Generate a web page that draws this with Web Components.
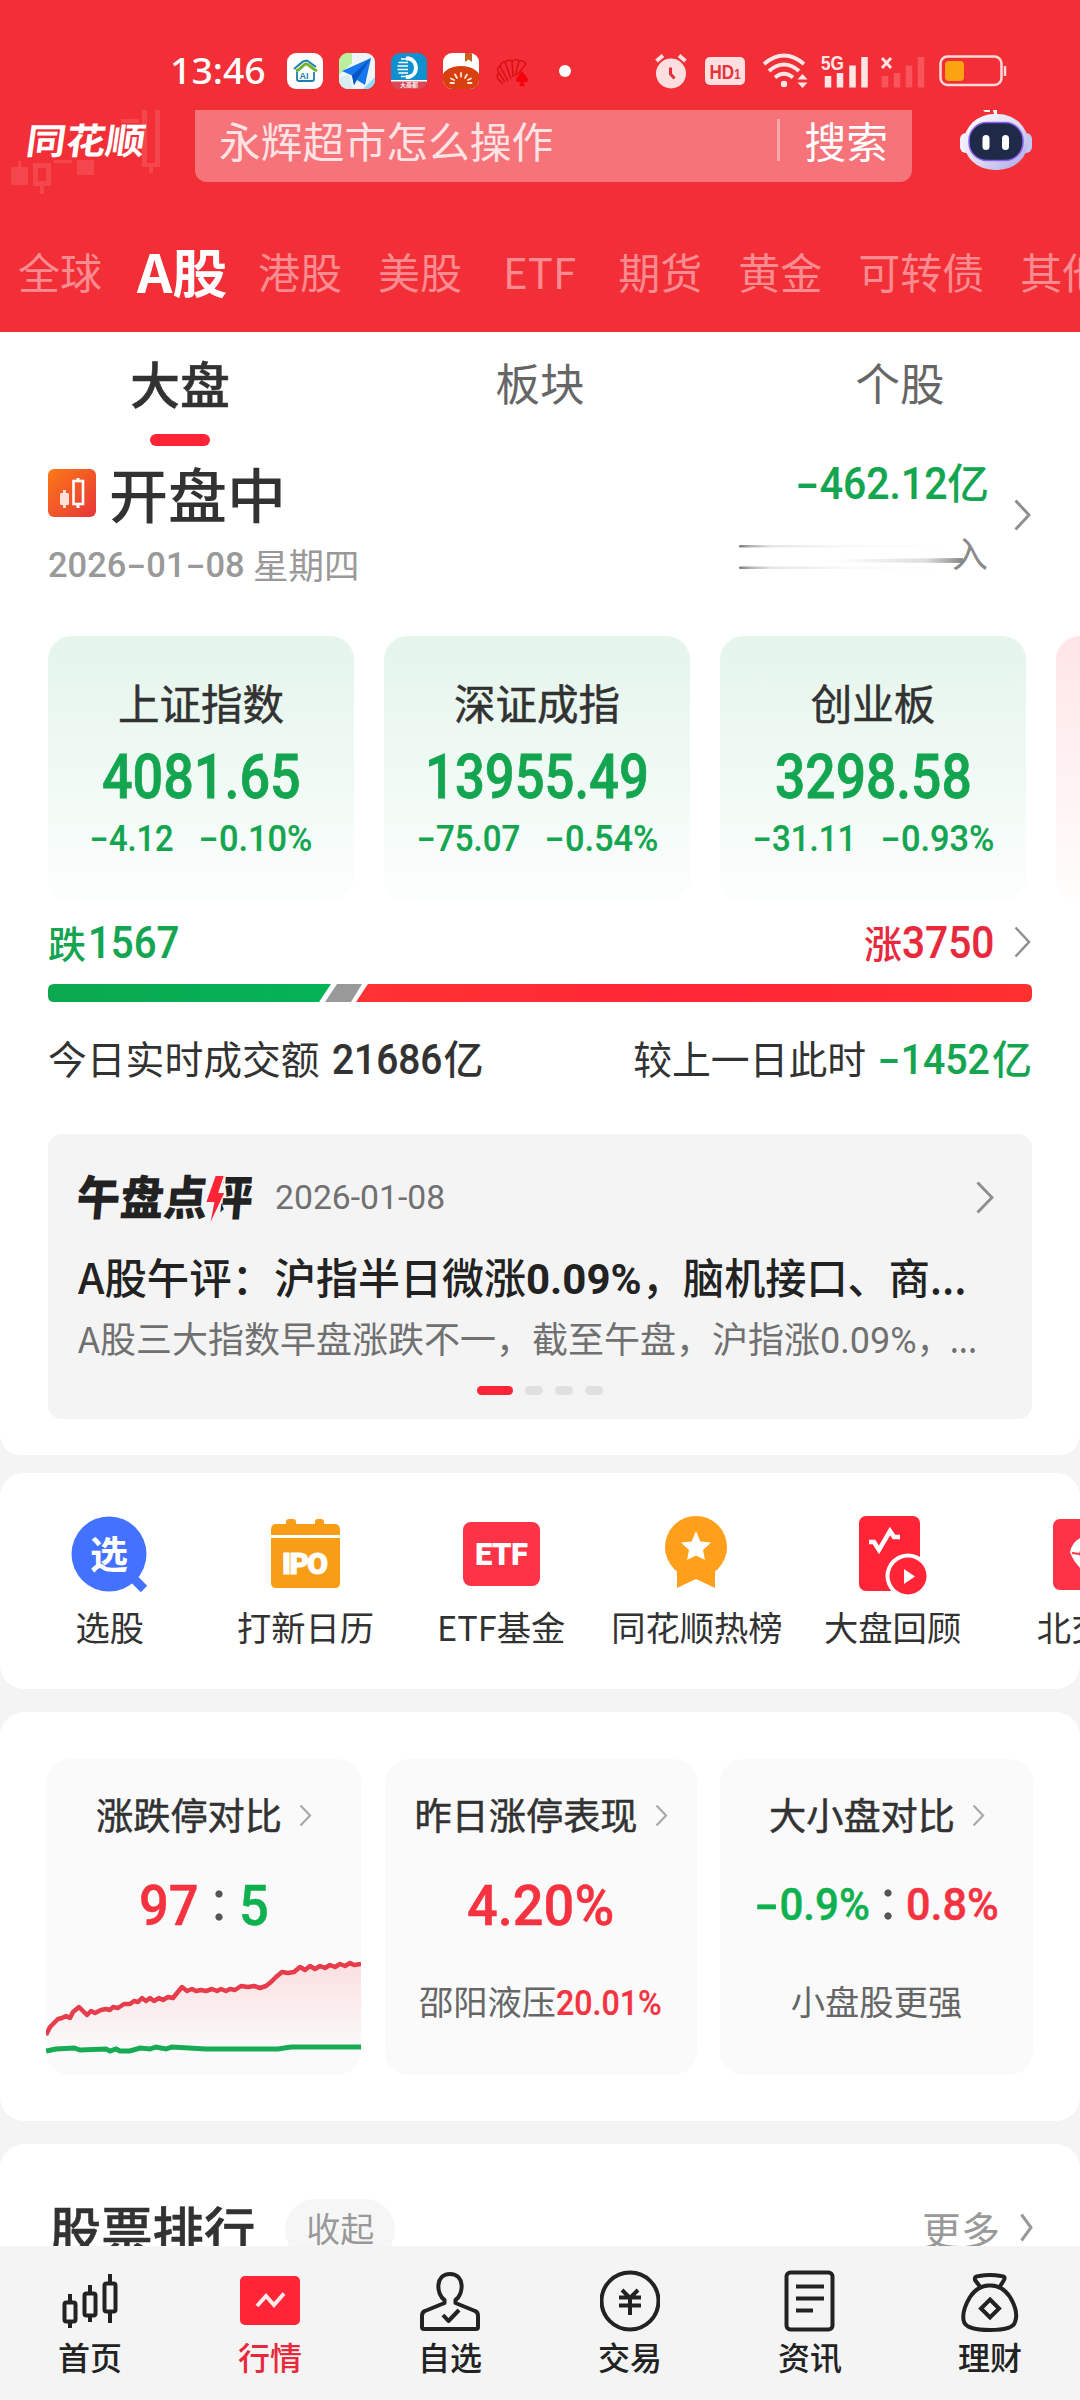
<!DOCTYPE html>
<html lang="zh-CN">
<head>
<meta charset="utf-8">
<title>同花顺</title>
<style>
html, body {
  margin: 0;
  padding: 0;
}
body {
  width: 1080px;
  height: 2400px;
  overflow: hidden;
  background: #f4f4f4;
  color: #323232;
  font-family: "Noto Sans CJK SC", "Noto Sans", sans-serif;
  font-size: 36px;
}
</style>
</head>
<body>
<market-app></market-app>
<script>
const DIN = `Roboto, "Noto Sans CJK SC", sans-serif`;

/* shared base: every element writes its html into an open shadow root */
class BaseElement extends HTMLElement {
  constructor() {
    super();
    this.attachShadow({ mode: "open" });
  }
  connectedCallback() {
    this.shadowRoot.innerHTML = this.html;
  }
  attr(name) {
    return this.getAttribute(name) || "";
  }
}

const chevron = (w, h, color = "#8f8f8f", sw = 3) =>
  `<svg width="${w}" height="${h}" viewBox="0 0 ${w} ${h}" fill="none" stroke="${color}" stroke-width="${sw}"><path d="M1.5 1.5L${w - 2} ${h / 2}L1.5 ${h - 1.5}"/></svg>`;

/**
 * `fit-text`
 * one line of text, squeezed or stretched to the width in `w`
 */
class FitText extends BaseElement {
  get html() {
    const text = this.attr("text");
    const inner = this.hasAttribute("din") ? text.replace(/-/g, "<i>-</i>") : text;
    return `
<style>
:host {
  display: inline-block;
  flex: none;
  width: ${this.attr("w")}px;
  white-space: nowrap;
}
:host([din]) {
  font-family: ${DIN};
  font-weight: 500;
  -webkit-text-stroke: .2px currentColor;
}
span {
  display: inline-block;
  transform-origin: 0 50%;
}
i {
  display: inline-block;
  font-style: normal;
  transform: scaleX(1.65);
  margin: 0 .12em;
}
</style><span>${inner}</span>`;
  }
  connectedCallback() {
    super.connectedCallback();
    const span = this.shadowRoot.querySelector("span");
    // offsetWidth ignores transforms, so a skewed parent does not disturb it
    const natural = span.offsetWidth;
    if (natural) {
      span.style.transform = `scaleX(${Number(this.attr("w")) / natural})`;
    }
  }
}

class StatusBar extends BaseElement {
  get html() {
    return `
<style>
:host {
  display: flex;
  align-items: center;
  height: 110px;
  box-sizing: border-box;
  padding: 32px 73px 0 170px;
  color: #fff;
  font: 500 37px "Noto Sans", sans-serif;
}
fit-text {
  margin-top: -3px;
}
.apps {
  display: flex;
  gap: 16px;
  margin-left: 21px;
}
.dot {
  width: 12px;
  height: 12px;
  border-radius: 50%;
  background: #fff;
  margin-left: 28px;
}
.sys {
  display: flex;
  align-items: center;
  margin-left: auto;
}
svg {
  display: block;
  overflow: visible;
}
</style>
<fit-text text="13:46" w="96"></fit-text>
<div class="apps">
  <svg width="36" height="36" viewBox="0 0 36 36"><rect width="36" height="36" rx="9" fill="#fff"/><path d="M7 16L16 8.500L20 7.500L29 14" fill="none" stroke="#1d7fb0" stroke-width="2"/><path d="M9 18C14 17 16 11 19 11S24 15 30 18" fill="none" stroke="#6fb52c" stroke-width="3"/><path d="M10 19V26Q10 28 12 28H25Q27 28 27 26V19" fill="none" stroke="#1d7fb0" stroke-width="1.800"/><text x="12.500" y="25.500" font-size="9" font-weight="700" fill="#1d7fb0" font-family="Liberation Sans">AI</text></svg>
  <svg width="36" height="36" viewBox="0 0 36 36"><defs><clipPath id="c"><rect width="36" height="36" rx="9"/></clipPath></defs><g clip-path="url(#c)"><rect width="36" height="36" fill="#eef6fb"/><path d="M0 0H13V10L0 22z" fill="#b9ef9c"/><path d="M36 24L24 36H36z" fill="#8adcf6"/><path d="M0 36V24L10 22L14 36z" fill="#d8edf2"/><path d="M32 5L3 18L13 22.500L15 32L18 27L26 32z" fill="#1677ee"/><path d="M32 5L13 22.500L15 32L18 26z" fill="#0a55c4"/></g></svg>
  <svg width="36" height="36" viewBox="0 0 36 36"><rect width="36" height="36" rx="9" fill="#1190cf"/><path d="M0 27H36Q36 36 27 36H9Q0 36 0 27z" fill="#d84a55"/><rect y="27" width="36" height="1.500" fill="#fff"/><path d="M15 5.500H18A9 9.500 0 0 1 18 24H15" fill="none" stroke="#fff" stroke-width="4"/><path d="M10 6H17M7.500 9.500H17M6.500 13H17M6.500 16.500H17M7.500 20H17M10 23.500H17" stroke="#fff" stroke-width="1.500"/><text x="9" y="34.200" font-size="6" fill="#fff" font-family="Noto Sans CJK SC">大高都</text></svg>
  <svg width="36" height="36" viewBox="0 0 36 36"><defs><clipPath id="t"><rect width="36" height="36" rx="9"/></clipPath></defs><g clip-path="url(#t)"><rect width="36" height="36" fill="#fff"/><ellipse cx="18" cy="27" rx="20" ry="14" fill="#d8400f"/><path d="M22 0H29V9L25.500 6.500L22 9z" fill="#c8601e"/><path d="M18 20V23.500M12 21.500L14 25M24 21.500L22 25M8 25.500L11 27M28 25.500L25 27M7.500 30H11M25 30H28.500" stroke="#ffe9d8" stroke-width="1.800" stroke-linecap="round"/></g></svg>
  <svg width="36" height="36" viewBox="0 0 36 36"><g fill="none" stroke="#dc0f18" stroke-width="1.600"><path d="M8 31L3 26Q1 22 4 20L10 29M4 20Q1 15 5 13L13 28M5 13Q6 9 10 9L16 26M10 9Q14 6 17 8L18 24M17 8Q22 5 24 8L20 23M24 8Q29 7 31 11L22 22"/></g><path d="M27 18L33 26Q33 30 28 29L30 33H24L26 29Q21 30 21 26z" fill="#f5000c"/></svg>
</div>
<div class="dot"></div>
<div class="sys">
  <svg width="32" height="36" viewBox="0 0 32 36" style="margin-right:18px"><circle cx="16" cy="20.500" r="15" fill="#ffdedf"/><path d="M1.500 8L8 2.500M30.500 8L24 2.500" stroke="#ffdedf" stroke-width="4"/><path d="M15.500 14.500V21L19.500 25.500" stroke="#e03038" stroke-width="3" fill="none"/></svg>
  <svg width="40" height="28" viewBox="0 0 40 28" style="margin-right:18px"><rect width="40" height="28" rx="5" fill="#ffdedf"/><text x="4.500" y="22" font-size="21" font-weight="700" textLength="31" lengthAdjust="spacingAndGlyphs" fill="#e5333b" font-family="Liberation Sans">HD<tspan font-size="14">1</tspan></text></svg>
  <svg width="46" height="36" viewBox="0 0 46 36" style="margin-right:12px"><g fill="none" stroke="#ffe6e6" stroke-width="3.800"><path d="M1 11Q21 -6 41 11"/><path d="M6 18Q21 5 36 18"/><path d="M12 24.500Q21 17 30 24.500"/></g><circle cx="21" cy="31" r="3.200" fill="#ffe6e6"/><path d="M34.500 26.500H44.500L39.500 21zM34.500 29.500H44.500L39.500 35z" fill="#ffe6e6"/></svg>
  <svg width="48" height="36" viewBox="0 0 48 36" style="margin-right:12px"><text x="0" y="16.500" font-size="21" font-weight="700" textLength="23" lengthAdjust="spacingAndGlyphs" fill="#ffe6e6" font-family="Liberation Sans">5G</text><path d="M7 23V34.500M19 20V34.500M31.500 12.500V34.500M43.500 4V34.500" stroke="#ffe6e6" stroke-width="6.500"/></svg>
  <svg width="44" height="36" viewBox="0 0 44 36" style="margin-right:14px"><path d="M1 5L10 15M10 5L1 15" stroke="#ffe6e6" stroke-width="2.800"/><path d="M4 23V34.500M16 20V34.500M28 12.500V34.500M40 4V34.500" stroke="#f9535b" stroke-width="6.500"/></svg>
  <svg width="68" height="32" viewBox="0 0 68 32"><rect x="1.500" y="1.500" width="61" height="28.500" rx="7" fill="none" stroke="#ffd9d9" stroke-width="2.500"/><rect x="6" y="6" width="19" height="20" rx="4" fill="#fca311"/><path d="M66 11V21" stroke="#ffd9d9" stroke-width="2.500"/></svg>
</div>`;
  }
}

class SearchHeader extends BaseElement {
  get html() {
    return `
<style>
:host {
  display: flex;
  height: 72px;
  position: relative;
  color: #fff;
}
.candles {
  position: absolute;
  left: 0;
  top: 0;
}
.logo {
  position: relative;
  width: 168px;
  padding-left: 27px;
  height: 56px;
  line-height: 56px;
  font-size: 36px;
  font-weight: 700;
}
.logo fit-text {
  transform: skewX(-8deg);
}
.box {
  display: flex;
  align-items: center;
  box-sizing: border-box;
  width: 717px;
  height: 72px;
  padding: 0 24px 12px 24px;
  border-radius: 0 0 12px 12px;
  background: #f67379;
  font-size: 41.800px;
  line-height: 60px;
}
.box span { margin-top: -1px; }
.hint { color: #ffe3e4; }
.rule {
  width: 3px;
  height: 42px;
  margin: 0 24px 0 auto;
  background: #fba8ab;
}
.robot { margin-left: 47px; }
svg { display: block; }
</style>
<svg class="candles" width="190" height="90" viewBox="0 0 190 90" fill="#f5464d"><rect x="11" y="57" width="17" height="18"/><rect x="18" y="51" width="3" height="7"/><path d="M33 53H51V76H44V84H40V76H33zM38 58V71H46V58z" fill-rule="evenodd"/><rect x="54" y="50" width="18" height="3"/><rect x="77" y="50" width="17" height="15"/><path d="M142 0H147V53H155V0H160V57H153V63H149V57H142z"/><rect x="121" y="9" width="18" height="4"/></svg>
<div class="logo"><fit-text text="同花顺" w="119"></fit-text></div>
<div class="box"><span class="hint">永辉超市怎么操作</span><div class="rule"></div><span>搜索</span></div>
<svg class="robot" width="74" height="62" viewBox="0 0 74 62">
  <defs><linearGradient id="h" x1="0" y1="0" x2="1" y2="1"><stop offset="0" stop-color="#fff"/><stop offset=".55" stop-color="#dcd8f4"/><stop offset="1" stop-color="#a8a4e8"/></linearGradient></defs>
  <path d="M24 0H31V2H26zM34 0H38V4H35z" fill="#fff"/>
  <rect x="1" y="23" width="14" height="20" rx="6" fill="#f1effb"/><rect x="59" y="23" width="14" height="20" rx="6" fill="#c3c6f4"/>
  <rect x="5" y="4" width="64" height="56" rx="30" fill="url(#h)"/>
  <rect x="10" y="12.500" width="54" height="38" rx="18" fill="#1e2a48" stroke="#8a5ff0" stroke-width="1.500"/>
  <rect x="23.500" y="25" width="7" height="15" rx="3.500" fill="#fff"/><rect x="43" y="25" width="7" height="15" rx="3.500" fill="#fff"/>
</svg>`;
  }
}

class MarketTabs extends BaseElement {
  get html() {
    return `
<style>
:host {
  display: flex;
  align-items: center;
  gap: 36px;
  height: 123px;
  margin-top: 27px;
  padding-left: 18px;
  white-space: nowrap;
  overflow: hidden;
  font-size: 42px;
  color: #fa8b90;
}
.on {
  font-size: 52px;
  font-weight: 700;
  color: #fff;
  margin: 0 -5px 0 -1px;
}
.etf { margin: 0 6px 0 5px; }
span { flex: none; }
</style>
<span>全球</span><fit-text class="on" text="A股" w="90"></fit-text><span>港股</span><span>美股</span><span class="etf">ETF</span><span>期货</span><span>黄金</span><span>可转债</span><span>其他</span>`;
  }
}

class SubTabs extends BaseElement {
  get html() {
    return `
<style>
:host {
  display: grid;
  grid-template-columns: repeat(3, 1fr);
  height: 114px;
  text-align: center;
  font-size: 44.500px;
  line-height: 100px;
  color: #666;
}
.on {
  font-size: 50px;
  font-weight: 500;
  -webkit-text-stroke: .5px currentColor;
  color: #323232;
}
.on::after {
  content: "";
  display: block;
  width: 60px;
  height: 12px;
  margin: 2px auto 0;
  border-radius: 6px;
  background: #ff2436;
}
</style>
<div class="on">大盘</div><div>板块</div><div>个股</div>`;
  }
}

class MarketState extends BaseElement {
  get html() {
    return `
<style>
:host {
  display: flex;
  height: 190px;
  box-sizing: border-box;
  padding: 0 48px;
}
.title {
  display: flex;
  align-items: center;
  gap: 13px;
  height: 80px;
  margin-top: 7px;
  font-size: 59px;
  line-height: 80px;
  font-weight: 500;
}
.title svg { display: block; }
.date {
  display: flex;
  gap: 8px;
  margin-top: 12px;
  font-size: 35.500px;
  line-height: 40px;
  color: #999;
}
.date fit-text { -webkit-text-stroke: 0; }
.date span { margin-top: -1px; }
.flow {
  margin-left: auto;
  width: 250px;
  text-align: right;
}
.amount {
  display: flex;
  justify-content: flex-end;
  align-items: baseline;
  height: 50px;
  margin: 10px -2px 0 0;
  font-size: 42px;
  line-height: 50px;
  font-weight: 500;
  color: #13a54f;
}
.amount fit-text { font-size: 45px; }
.smear {
  display: flex;
  justify-content: flex-end;
  align-items: flex-start;
  margin: 26px -2px 0 0;
  font-size: 36px;
  line-height: 40px;
  color: #8a8a8a;
}
.smear span {
  width: 25px;
  direction: rtl;
  margin-right: 1px;
}
.more {
  margin: 53px 1px 0 27px;
}
.more svg { display: block; }
</style>
<div>
  <div class="title">
    <svg width="48" height="48" viewBox="0 0 48 48"><defs><linearGradient id="g" x1="0" y1="0" x2="1" y2="1"><stop offset="0" stop-color="#fb7a16"/><stop offset="1" stop-color="#e8343a"/></linearGradient></defs><rect width="48" height="48" rx="6" fill="url(#g)"/><rect x="12" y="24" width="9" height="12" rx="1" fill="#ffe0d6"/><path d="M16.500 21V39" stroke="#ffe0d6" stroke-width="3"/><rect x="25.500" y="12" width="9.500" height="23" fill="none" stroke="#fff" stroke-width="2.600"/><path d="M30 9V12M30 35V39" stroke="#fff" stroke-width="3"/></svg>
    <fit-text text="开盘中" w="177"></fit-text>
  </div>
  <div class="date"><fit-text din text="2026-01-08" w="197"></fit-text><span>星期四</span></div>
</div>
<div class="flow">
  <div class="amount"><fit-text din text="-462.12" w="151"></fit-text><span>亿</span></div>
  <div class="smear">
    <svg width="224" height="40" viewBox="0 0 224 40"><defs>
      <linearGradient id="l"><stop offset="0" stop-color="#777"/><stop offset=".05" stop-color="#b0b0b0"/><stop offset=".15" stop-color="#e6e6e6"/><stop offset=".5" stop-color="#f9f9f9"/><stop offset="1" stop-color="#fff"/></linearGradient>
      <linearGradient id="r"><stop offset=".3" stop-color="#fff"/><stop offset=".8" stop-color="#ddd"/><stop offset="1" stop-color="#888"/></linearGradient></defs>
      <rect y="13" width="216" height="2.600" rx="1.300" fill="url(#l)"/><rect y="34.500" width="216" height="2.600" rx="1.300" fill="url(#l)"/><path d="M40 28L224 26V31L40 30z" fill="url(#r)"/></svg><span>入</span>
  </div>
</div>
<div class="more">${chevron(17, 32)}</div>`;
  }
}

class IndexCard extends BaseElement {
  get html() {
    return `
<style>
:host {
  display: flex;
  flex-direction: column;
  align-items: center;
  flex: none;
  width: 306px;
  height: 266px;
  border-radius: 24px;
  background: linear-gradient(#e4f5eb, #fcfefd);
  color: #13a54f;
}
:host([up]) { background: linear-gradient(#ffe5e7, #fffdfd); }
.name {
  height: 60px;
  margin-top: 36px;
  font-size: 41.500px;
  line-height: 60px;
  font-weight: 400;
  -webkit-text-stroke: .5px currentColor;
  color: #323232;
}
.price {
  height: 60px;
  margin-top: 15px;
  font-size: 62px;
  line-height: 60px;
  -webkit-text-stroke: .8px currentColor;
}
.change {
  display: flex;
  gap: 25px;
  margin-top: 12px;
  height: 40px;
  font-size: 36.500px;
  line-height: 40px;
}
</style>
${this.hasAttribute("up") ? "" : `
<div class="name">${this.attr("name")}</div>
<fit-text class="price" din text="${this.attr("price")}" w="${this.attr("pw")}"></fit-text>
<div class="change"><fit-text din text="${this.attr("diff")}" w="${this.attr("dw")}"></fit-text><fit-text din text="${this.attr("rate")}" w="113"></fit-text></div>`}`;
  }
}

class MarketBreadth extends BaseElement {
  get html() {
    return `
<style>
:host {
  display: block;
  padding: 0 48px;
}
.row {
  display: flex;
  align-items: baseline;
  font-size: 38px;
}
.count {
  height: 82px;
  line-height: 80px;
  font-weight: 500;
}
.count fit-text { font-size: 45px; }
.down { color: #13a54f; }
.up {
  color: #e8293c;
  margin-left: auto;
}
.count svg {
  align-self: center;
  margin: 0 1px 2px 20px;
}
.bar { display: block; }
.turnover {
  height: 116px;
  font-size: 38.800px;
  line-height: 111px;
}
.turnover fit-text {
  font-size: 42px;
  margin-left: 12px;
}
.turnover .unit {
  font-size: 40px;
  font-weight: 500;
  margin-left: 2px;
}
.right { margin-left: auto; }
</style>
<div class="row count"><span class="down">跌</span><fit-text class="down" din text="1567" w="91" style="margin-left:2px"></fit-text><span class="up">涨</span><fit-text din text="3750" w="92" style="color:#e8293c"></fit-text>${chevron(17, 32, "#8f8f8f", 2.5)}</div>
<svg class="bar" width="984" height="18" viewBox="0 0 984 18"><defs>
  <linearGradient id="d"><stop offset="0" stop-color="#0ba84f"/><stop offset="1" stop-color="#05b357"/></linearGradient>
  <linearGradient id="u"><stop offset="0" stop-color="#ff3232"/><stop offset=".5" stop-color="#ff2636"/><stop offset="1" stop-color="#ff3030"/></linearGradient></defs>
  <path d="M6 0H283L271 18H6Q0 18 0 12V6Q0 0 6 0z" fill="url(#d)"/><path d="M289 0H314L303 18H277z" fill="#999"/><path d="M320 0H978Q984 0 984 6V12Q984 18 978 18H308z" fill="url(#u)"/></svg>
<div class="row turnover"><span>今日实时成交额</span><fit-text din text="21686" w="110"></fit-text><span class="unit">亿</span><span class="right">较上一日此时</span><fit-text class="down" din text="-1452" w="112"></fit-text><span class="unit down">亿</span></div>`;
  }
}

class NewsCard extends BaseElement {
  get html() {
    return `
<style>
:host {
  display: block;
  box-sizing: border-box;
  height: 285px;
  margin: 16px 48px 36px;
  padding: 32px 30px 0 30px;
  border-radius: 14px;
  background: #f4f4f4;
}
.head {
  display: flex;
  align-items: center;
  height: 62px;
}
.brand {
  display: flex;
  position: relative;
  width: 180px;
  font-size: 47px;
  line-height: 56px;
  font-weight: 900;
  color: #222;
  transform: skewX(-5deg);
  margin: -4px 0 0 -1px;
}
.brand .cut { clip-path: inset(0 0 0 31%); }
.brand svg {
  position: absolute;
  left: 129px;
  top: 9px;
}
.date {
  margin: 1px 0 0 18px;
  font: 400 33.500px Roboto, sans-serif;
  color: #707070;
}
.head > svg { margin: 0 8px 0 auto; }
.title, .desc {
  display: flex;
  align-items: baseline;
  white-space: nowrap;
}
.title {
  height: 60px;
  margin-top: 18px;
  font-size: 42px;
  line-height: 60px;
  font-weight: 500;
  color: #222;
}
.desc {
  height: 50px;
  margin-top: 6px;
  font-size: 36px;
  line-height: 50px;
  color: #707070;
}
.title .num { font-family: ${DIN}; font-weight: 700; }
.desc .num { font-family: ${DIN}; }
.dots {
  display: flex;
  justify-content: center;
  gap: 12px;
  margin-top: 24px;
}
.dots i {
  width: 18px;
  height: 9px;
  border-radius: 4.500px;
  background: #e0e0e0;
}
.dots .on {
  width: 36px;
  background: #fa2638;
}
</style>
<div class="head">
  <div class="brand"><fit-text text="午盘点" w="131"></fit-text><fit-text class="cut" text="评" w="45"></fit-text><svg width="18" height="46" viewBox="0 0 18 46"><path d="M8 0H16L12 17H18L7 46L9 26H1z" fill="#ff2436"/></svg></div>
  <fit-text class="date" text="2026-01-08" w="170"></fit-text>
  ${chevron(18, 33)}
</div>
<div class="title"><fit-text text="A股午评：" w="196"></fit-text><fit-text text="沪指半日微涨" w="252"></fit-text><fit-text class="num" text="0.09%" w="116"></fit-text><fit-text text="，脑机接口、商..." w="325"></fit-text></div>
<div class="desc"><fit-text text="A股三大指数早盘涨跌不一，" w="454"></fit-text><fit-text text="截至午盘，沪指涨" w="288"></fit-text><fit-text class="num" text="0.09%" w="97"></fit-text><fit-text text="，..." w="60"></fit-text></div>
<div class="dots"><i class="on"></i><i></i><i></i><i></i></div>`;
  }
}

const LINK_ICONS = {
  pick: `<circle cx="38" cy="38" r="37.500" fill="#4272ff"/><path d="M64 62L72 70" stroke="#fff" stroke-width="0"/><path d="M62 62L73 73" stroke="#4272ff" stroke-width="9"/><text x="38" y="52" text-anchor="middle" font-size="38" font-weight="700" fill="#fff">选</text>`,
  ipo: `<path d="M4 19V14Q4 8 9 8H19V6Q19 3 22 3H26Q29 3 29 6V8H48V6Q48 3 51 3H54Q57 3 57 6V8H68Q73 8 73 14V19zM4 22H73V67Q73 72 68 72H9Q4 72 4 67z" fill="#f79d16"/><text x="38" y="58" text-anchor="middle" font-size="30" font-weight="900" fill="#fff" stroke="#fff" stroke-width="1" textLength="46" lengthAdjust="spacing" font-family="Roboto">IPO</text>`,
  etf: `<rect x="0" y="6" width="77" height="64" rx="8" fill="#ff3347"/><text x="38.500" y="49" text-anchor="middle" font-size="31" font-weight="900" fill="#fff" textLength="53" lengthAdjust="spacing" font-family="Roboto">ETF</text>`,
  hot: `<circle cx="38" cy="31" r="31" fill="#ffa01c"/><path d="M19 50H57V72L38 63L19 72z" fill="#ffa01c"/><path d="M38 15L42.300 25.500L53 26.500L45 34L47 44L38 39.500L29 44L31 34L23 26.500L33.700 25.500z" fill="#fff"/>`,
  review: `<rect x="5" y="0" width="61" height="75" rx="7" fill="#ff2436"/><circle cx="54" cy="60" r="22.500" fill="#fff"/><circle cx="54" cy="60" r="18.500" fill="#ff2436"/><path d="M50 53V68L61 60.500z" fill="#fff"/><path d="M15 26H20L25 34L36 15L40 21H46" fill="none" stroke="#fff" stroke-width="4.500"/>`,
  north: `<rect x="3" y="3" width="71" height="71" rx="7" fill="#ff3347"/><path d="M20 36Q22 26 32 21H48L58 38L38 58Q25 50 20 36z" fill="#fff"/><path d="M22 37L30 38L35 23M30 38L38 56" stroke="#ff3347" stroke-width="2" fill="none"/>`,
};

class QuickLinks extends BaseElement {
  get html() {
    const links = [
      ["pick", "选股"],
      ["ipo", "打新日历"],
      ["etf", "ETF基金"],
      ["hot", "同花顺热榜"],
      ["review", "大盘回顾"],
      ["north", "北交所"],
    ];
    return `
<style>
:host {
  display: flex;
  box-sizing: border-box;
  height: 216px;
  padding: 43px 0 0 12px;
  border-radius: 24px;
  background: #fff;
  overflow: hidden;
  font-size: 34.300px;
}
.link {
  display: flex;
  flex-direction: column;
  align-items: center;
  flex: none;
  width: 195.700px;
  line-height: 50px;
}
svg {
  display: block;
  margin-bottom: 5px;
}
</style>
${links.map(([icon, label]) => `<div class="link"><svg width="77" height="80" viewBox="0 0 77 80">${LINK_ICONS[icon]}</svg>${label}</div>`).join("")}`;
  }
}

class CompareCard extends BaseElement {
  get html() {
    return `
<style>
:host {
  display: block;
  position: relative;
  height: 316px;
  border-radius: 24px;
  background: #fafafa;
  overflow: hidden;
}
.title {
  display: flex;
  align-items: center;
  justify-content: center;
  gap: 17px;
  height: 50px;
  margin-top: 30px;
  padding-left: 1px;
  font-size: 37.200px;
  line-height: 50px;
  font-weight: 400;
  -webkit-text-stroke: .5px currentColor;
}
.title svg { margin-top: 3px; }
</style>
<div class="title">${this.attr("name")}${chevron(13, 23, "#aaa", 2.2)}</div>
<slot></slot>`;
  }
}

const LIMIT_UP = "M0 87L4 79L8 75L12 71L16 70L20 68L24 70L27 64L33 59L37 63L41 67L45 63L49 65L55 62L60 61L64 62L67 59L72 60L78 56L84 56L88 53L92 54L96 50L100 53L104 50L108 53L113 50L117 52L122 49L127 50L131 45L136 39L141 43L146 41L150 43L155 42L160 43L166 41L171 43L175 41L180 43L184 41L189 42L195 38L202 39L208 38L214 40L220 38L225 34L230 29L236 24L242 25L248 24L254 19L259 22L264 18L269 21L274 18L279 20L284 17L289 19L294 16L299 18L304 15L308 17L315 16";

class ComparePanel extends BaseElement {
  get html() {
    return `
<style>
:host {
  display: grid;
  grid-template-columns: 315px 312px 313px;
  gap: 23.500px;
  box-sizing: border-box;
  height: 409px;
  margin: 23px 0;
  padding: 46.500px 0 0 46px;
  border-radius: 24px;
  background: #fff;
}
.value {
  display: flex;
  align-items: center;
  justify-content: center;
  height: 64px;
  margin-top: 35px;
  font-size: 56px;
  line-height: 64px;
}
.value fit-text { -webkit-text-stroke: .5px currentColor; }
.small { font-size: 45px; margin-top: 34px; }
.red { color: #f5323f; }
.green { color: #0eb04f; }
.colon {
  width: 8px;
  height: 31px;
  flex: none;
  margin: 0 16px;
  background: radial-gradient(circle at 50% 4px, #555 3.200px, transparent 4px), radial-gradient(circle at 50% 27px, #555 3.200px, transparent 4px);
}
.note {
  display: flex;
  align-items: baseline;
  justify-content: center;
  margin-top: 37px;
  height: 50px;
  font-size: 34.300px;
  line-height: 50px;
  color: #666;
}
.small + .note { margin-top: 38px; }
.chart {
  display: block;
  margin-top: 10px;
}
</style>
<compare-card name="涨跌停对比">
  <div class="value"><fit-text class="red" din text="97" w="60"></fit-text><div class="colon"></div><fit-text class="green" din text="5" w="30"></fit-text></div>
  <svg class="chart" width="315" height="110" viewBox="0 0 315 110"><defs><linearGradient id="f" x1="0" y1="0" x2="0" y2="1"><stop offset="0" stop-color="#fbdfe1"/><stop offset="1" stop-color="#fafafa"/></linearGradient></defs>
    <path d="${LIMIT_UP}V101H0z" fill="url(#f)"/>
    <path d="${LIMIT_UP}" fill="none" stroke="#e63c4b" stroke-width="4.500" stroke-linejoin="round"/>
    <path d="M0 103L10 101L28 100L34 102L60 101L64 103L70 101L74 103L84 103L94 100L104 101L110 99L120 101L126 99L160 101H232L245 99H315" fill="none" stroke="#18ab56" stroke-width="5"/></svg>
</compare-card>
<compare-card name="昨日涨停表现">
  <div class="value red"><fit-text din text="4.20%" w="147"></fit-text></div>
  <div class="note">邵阳液压<fit-text class="red" din text="20.01%" w="106"></fit-text></div>
</compare-card>
<compare-card name="大小盘对比">
  <div class="value small"><fit-text class="green" din text="-0.9%" w="115"></fit-text><div class="colon" style="margin:0 14px"></div><fit-text class="red" din text="0.8%" w="93"></fit-text></div>
  <div class="note">小盘股更强</div>
</compare-card>`;
  }
}

class RankPanel extends BaseElement {
  get html() {
    return `
<style>
:host {
  display: flex;
  align-items: center;
  box-sizing: border-box;
  height: 200px;
  padding: 0 47px 30px 50px;
  border-radius: 24px;
  background: #fff;
}
.title {
  font-size: 51.300px;
  font-weight: 500;
  -webkit-text-stroke: .5px currentColor;
  margin-top: -3px;
}
.fold {
  width: 110px;
  height: 62px;
  margin: 2px 0 0 30px;
  border-radius: 31px;
  background: #f6f6f6;
  text-align: center;
  font-size: 34px;
  line-height: 57px;
  color: #999;
}
.more {
  display: flex;
  align-items: center;
  gap: 20px;
  margin: -3px 0 0 auto;
  font-size: 39px;
  color: #999;
}
</style>
<span class="title">股票排行</span><span class="fold">收起</span><div class="more">更多${chevron(13, 29, "#999")}</div>`;
  }
}

const NAV_ICONS = {
  home: `<g fill="none" stroke="#222" stroke-width="4"><rect x="4.500" y="32.500" width="11" height="19" rx="2"/><path d="M10 24V32M10 52V58"/><rect x="24.500" y="23.500" width="11" height="22" rx="2"/><path d="M30 15V23M30 46V52"/><rect x="44.500" y="13.500" width="11" height="28" rx="2"/><path d="M50 4V13M50 42V53"/></g>`,
  market: `<rect x="0" y="6" width="60" height="49" rx="5" fill="#ff2436"/><path d="M17 36L26 26L34 35L44 23.500" fill="none" stroke="#ffe9ea" stroke-width="4"/>`,
  self: `<g fill="none" stroke="#222" stroke-width="4" stroke-linejoin="round"><path d="M24.500 30C16 24 15 4 30 4S44 24 35.500 30V33L55 41Q58 42 58 46V57Q58 59 56 59H4Q2 59 2 57V46Q2 42 5 41L24.500 33z"/><path d="M23 45L28.500 51L39 40"/></g>`,
  trade: `<g fill="none" stroke="#222" stroke-width="4"><circle cx="30" cy="31" r="28.500"/><path d="M22 20L30 28L38 20M19 27.500H41M19 35.500H41M30 28V45"/></g>`,
  news: `<g fill="none" stroke="#222" stroke-width="4"><rect x="6.500" y="2.500" width="46" height="57" rx="4"/><path d="M16 16.500H44M16 28.500H44M16 40.500H33"/></g>`,
  wealth: `<g fill="none" stroke="#222" stroke-width="4" stroke-linejoin="round"><path d="M21 18L15 10Q14 6 19 6Q30 4 41 6Q46 6 44 10L39 18"/><path d="M30 15.500Q42 15 50 27Q59 42 55 52Q53 60 30 60T4 52Q1 42 10 27Q18 15 30 15.500z"/><path d="M30 29.500L39 38.500L30 47.500L21 38.500z" stroke-linejoin="miter"/></g>`,
};

class BottomNav extends BaseElement {
  get html() {
    const items = [
      ["home", "首页"],
      ["market", "行情"],
      ["self", "自选"],
      ["trade", "交易"],
      ["news", "资讯"],
      ["wealth", "理财"],
    ];
    return `
<style>
:host {
  display: grid;
  grid-template-columns: repeat(6, 1fr);
  flex: none;
  height: 154px;
  background: #f4f4f4;
  font-size: 32px;
  font-weight: 500;
  color: #222;
}
.item {
  display: flex;
  flex-direction: column;
  align-items: center;
  line-height: 44px;
  padding-top: 24px;
}
.item.market { color: #e8293c; }
svg {
  display: block;
  margin-bottom: 2px;
}
</style>
${items.map(([icon, label]) => `<div class="item ${icon}"><svg width="60" height="62" viewBox="0 0 60 62">${NAV_ICONS[icon]}</svg>${label}</div>`).join("")}`;
  }
}

class MarketApp extends BaseElement {
  get html() {
    return `
<style>
:host {
  display: flex;
  flex-direction: column;
  height: 2400px;
}
header {
  flex: none;
  height: 332px;
  background: #f22f37;
}
main {
  flex: 1;
  min-height: 0;
  overflow: hidden;
}
.overview {
  height: 1123px;
  margin-bottom: 18px;
  border-radius: 0 0 20px 20px;
  background: #fff;
  overflow: hidden;
}
.cards {
  display: flex;
  gap: 30px;
  padding-left: 48px;
  overflow: hidden;
}
</style>
<header>
  <status-bar></status-bar>
  <search-header></search-header>
  <market-tabs></market-tabs>
</header>
<main>
  <section class="overview">
    <sub-tabs></sub-tabs>
    <market-state></market-state>
    <div class="cards">
      <index-card name="上证指数" price="4081.65" pw="199" diff="-4.12" dw="84" rate="-0.10%"></index-card>
      <index-card name="深证成指" price="13955.49" pw="224" diff="-75.07" dw="103" rate="-0.54%"></index-card>
      <index-card name="创业板" price="3298.58" pw="197" diff="-31.11" dw="103" rate="-0.93%"></index-card>
      <index-card up></index-card>
    </div>
    <market-breadth></market-breadth>
    <news-card></news-card>
  </section>
  <quick-links></quick-links>
  <compare-panel></compare-panel>
  <rank-panel></rank-panel>
</main>
<bottom-nav></bottom-nav>`;
  }
}

customElements.define("market-app", MarketApp);
customElements.define("status-bar", StatusBar);
customElements.define("search-header", SearchHeader);
customElements.define("market-tabs", MarketTabs);
customElements.define("sub-tabs", SubTabs);
customElements.define("market-state", MarketState);
customElements.define("index-card", IndexCard);
customElements.define("market-breadth", MarketBreadth);
customElements.define("news-card", NewsCard);
customElements.define("quick-links", QuickLinks);
customElements.define("compare-panel", ComparePanel);
customElements.define("compare-card", CompareCard);
customElements.define("rank-panel", RankPanel);
customElements.define("bottom-nav", BottomNav);
// last, so the final font size is already inherited when it measures
customElements.define("fit-text", FitText);
</script>
</body>
</html>
